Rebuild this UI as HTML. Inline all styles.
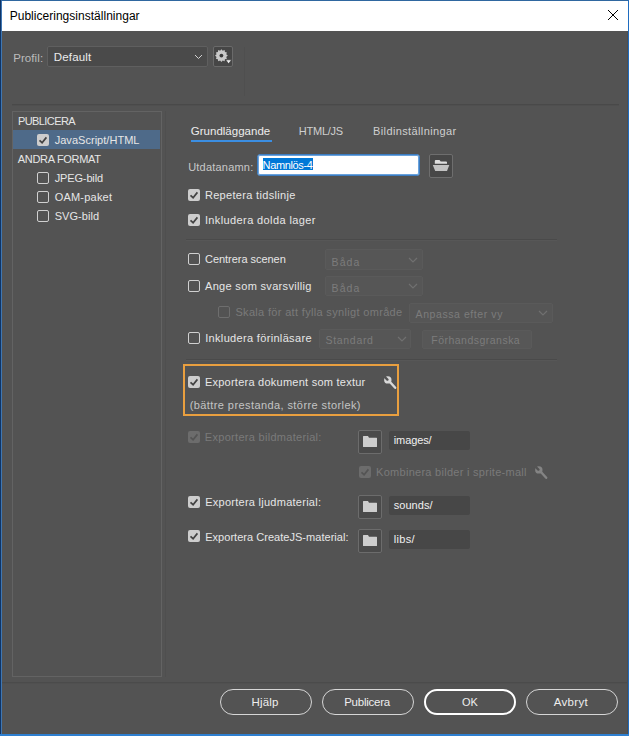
<!DOCTYPE html>
<html><head><meta charset="utf-8"><style>
html,body{margin:0;padding:0;width:629px;height:736px;overflow:hidden;background:#535353;}
.t{position:absolute;white-space:nowrap;line-height:1;font-family:"Liberation Sans",sans-serif;}
</style></head><body>
<div style="position:absolute;left:0px;top:0px;width:629px;height:31px;background:#ffffff"></div>
<div class="t" style="left:9.70px;top:10.24px;font-size:12px;letter-spacing:0.021px;color:#000000;">Publiceringsinställningar</div>
<svg style="position:absolute;left:607px;top:9px" width="12" height="12" viewBox="0 0 12 12"><path d="M1 1 L11 11 M11 1 L1 11" stroke="#000" stroke-width="1"/></svg>
<div class="t" style="left:13.20px;top:52.57px;font-size:11.5px;letter-spacing:0.084px;color:#bcbcbc;">Profil:</div>
<div style="position:absolute;left:47px;top:46px;width:161px;height:21px;box-sizing:border-box;border:1px solid #5f5f5f;background:#4a4a4a;border-radius:2px"></div>
<div class="t" style="left:53.80px;top:52.37px;font-size:11.5px;letter-spacing:0.161px;color:#ececec;">Default</div>
<svg style="position:absolute;left:194.0px;top:54.05px" width="9" height="5.5" viewBox="0 0 9 5.5"><path d="M1 1 L4.5 4.5 L8 1" fill="none" stroke="#d0d0d0" stroke-width="1.0"/></svg>
<div style="position:absolute;left:213px;top:46px;width:20px;height:21px;box-sizing:border-box;border:1px solid #6a6a6a;background:#464646;border-radius:2px"></div>
<svg style="position:absolute;left:213px;top:46px" width="20" height="21" viewBox="0 0 20 21"><polygon points="14.80,9.60 13.23,10.89 13.94,12.80 11.94,13.14 11.60,15.14 9.69,14.43 8.40,16.00 7.11,14.43 5.20,15.14 4.86,13.14 2.86,12.80 3.57,10.89 2.00,9.60 3.57,8.31 2.86,6.40 4.86,6.06 5.20,4.06 7.11,4.77 8.40,3.20 9.69,4.77 11.60,4.06 11.94,6.06 13.94,6.40 13.23,8.31" fill="#c9c9c9"/><circle cx="8.4" cy="9.6" r="1.9" fill="#3a3a3a"/><path d="M12.6 13.8 L18.6 13.8 L15.6 17.8 Z" fill="#eeeeee" stroke="#333" stroke-width="0.6"/></svg>
<div style="position:absolute;left:244px;top:47px;width:1px;height:49px;background:#4f4f4f"></div>
<div style="position:absolute;left:12px;top:104px;width:607px;height:1px;background:#494949"></div>
<div style="position:absolute;left:12px;top:105px;width:607px;height:1px;background:#4f4f4f"></div>
<div style="position:absolute;left:12px;top:111px;width:150px;height:566px;box-sizing:border-box;border:1px solid #636363;"></div>
<div style="position:absolute;left:165px;top:111px;width:1px;height:566px;background:#4f4f4f"></div>
<div style="position:absolute;left:13px;top:130px;width:147px;height:19px;background:#4e6a89"></div>
<div class="t" style="left:17.90px;top:115.99px;font-size:11px;letter-spacing:-0.569px;color:#e6e6e6;">PUBLICERA</div>
<svg style="position:absolute;left:37px;top:134px" width="12" height="12" viewBox="0 0 12 12"><rect x="0" y="0" width="12" height="12" rx="2" fill="#cdcdcd"/><path d="M2.5 6.3 L5.1 8.7 L9.4 3.4" fill="none" stroke="#434343" stroke-width="1.7"/></svg>
<div class="t" style="left:54.70px;top:135.09px;font-size:11px;letter-spacing:0.032px;color:#e6e6e6;">JavaScript/HTML</div>
<div class="t" style="left:17.80px;top:154.09px;font-size:11px;letter-spacing:-0.307px;color:#e6e6e6;">ANDRA FORMAT</div>
<svg style="position:absolute;left:37px;top:172px" width="12" height="12" viewBox="0 0 12 12"><rect x="0.5" y="0.5" width="11" height="11" rx="1.5" fill="none" stroke="#d0d0d0" stroke-width="1"/></svg>
<div class="t" style="left:54.70px;top:173.29px;font-size:11px;letter-spacing:-0.139px;color:#e6e6e6;">JPEG-bild</div>
<svg style="position:absolute;left:37px;top:191px" width="12" height="12" viewBox="0 0 12 12"><rect x="0.5" y="0.5" width="11" height="11" rx="1.5" fill="none" stroke="#d0d0d0" stroke-width="1"/></svg>
<div class="t" style="left:54.70px;top:192.39px;font-size:11px;letter-spacing:0.209px;color:#e6e6e6;">OAM-paket</div>
<svg style="position:absolute;left:37px;top:210px" width="12" height="12" viewBox="0 0 12 12"><rect x="0.5" y="0.5" width="11" height="11" rx="1.5" fill="none" stroke="#d0d0d0" stroke-width="1"/></svg>
<div class="t" style="left:54.70px;top:211.49px;font-size:11px;letter-spacing:0.069px;color:#e6e6e6;">SVG-bild</div>
<div class="t" style="left:190.80px;top:125.97px;font-size:11.5px;letter-spacing:0.010px;color:#ececec;">Grundläggande</div>
<div style="position:absolute;left:191px;top:140px;width:81px;height:2px;background:#3b8ee2"></div>
<div class="t" style="left:298.80px;top:126.39px;font-size:11px;letter-spacing:-0.239px;color:#cfcfcf;">HTML/JS</div>
<div class="t" style="left:373.00px;top:126.39px;font-size:11px;letter-spacing:0.385px;color:#cfcfcf;">Bildinställningar</div>
<div class="t" style="left:188.20px;top:162.49px;font-size:11px;letter-spacing:0.202px;color:#c8c8c8;">Utdatanamn:</div>
<div style="position:absolute;left:257px;top:154px;width:163px;height:22px;box-sizing:border-box;border:1px solid #3c7cc0;box-shadow:inset 0 0 0 1px #6aa2dc;background:#ffffff;border-radius:3px"></div>
<div style="position:absolute;left:263px;top:158px;width:50px;height:12px;background:#0078d7"></div>
<div class="t" style="left:262.60px;top:160.29px;font-size:11px;letter-spacing:-0.360px;color:#ffffff;">Namnlös-4</div>
<div style="position:absolute;left:429px;top:154px;width:24px;height:24px;box-sizing:border-box;border:1px solid #6e6e6e;background:#474747;border-radius:2px"></div>
<svg style="position:absolute;left:429px;top:154px" width="24" height="24" viewBox="0 0 24 24"><path d="M5.8 9.8 L5.8 7 Q5.8 6 6.8 6 L10.5 6 L11.7 7.4 L17 7.4 Q18 7.4 18 8.4 L18 9.8 Z" fill="#dedede"/><path d="M3.8 10.9 L20.3 10.9 L18 16.9 L6.2 16.9 Z" fill="#c2c2c2"/></svg>
<svg style="position:absolute;left:188px;top:189px" width="12" height="12" viewBox="0 0 12 12"><rect x="0" y="0" width="12" height="12" rx="2" fill="#cdcdcd"/><path d="M2.5 6.3 L5.1 8.7 L9.4 3.4" fill="none" stroke="#434343" stroke-width="1.7"/></svg>
<div class="t" style="left:204.90px;top:190.49px;font-size:11px;letter-spacing:0.324px;color:#e6e6e6;">Repetera tidslinje</div>
<svg style="position:absolute;left:188px;top:214px" width="12" height="12" viewBox="0 0 12 12"><rect x="0" y="0" width="12" height="12" rx="2" fill="#cdcdcd"/><path d="M2.5 6.3 L5.1 8.7 L9.4 3.4" fill="none" stroke="#434343" stroke-width="1.7"/></svg>
<div class="t" style="left:204.90px;top:214.69px;font-size:11px;letter-spacing:0.388px;color:#e6e6e6;">Inkludera dolda lager</div>
<div style="position:absolute;left:186px;top:239px;width:371px;height:1px;background:#4a4a4a"></div>
<div style="position:absolute;left:186px;top:240px;width:371px;height:1px;background:#575757"></div>
<svg style="position:absolute;left:188px;top:253px" width="12" height="12" viewBox="0 0 12 12"><rect x="0.5" y="0.5" width="11" height="11" rx="1.5" fill="none" stroke="#d0d0d0" stroke-width="1"/></svg>
<div class="t" style="left:205.00px;top:254.49px;font-size:11px;letter-spacing:-0.037px;color:#e6e6e6;">Centrera scenen</div>
<div style="position:absolute;left:325px;top:249px;width:98px;height:21px;box-sizing:border-box;border:1px solid #5a5a5a;background:#565656;border-radius:2px"></div>
<div class="t" style="left:331.60px;top:256.91px;font-size:10.5px;letter-spacing:1.093px;color:#7c7c7c;">Båda</div>
<svg style="position:absolute;left:408.0px;top:256.5px" width="10" height="6" viewBox="0 0 10 6"><path d="M1 1 L5.0 5 L9 1" fill="none" stroke="#707070" stroke-width="1.2"/></svg>
<svg style="position:absolute;left:188px;top:280px" width="12" height="12" viewBox="0 0 12 12"><rect x="0.5" y="0.5" width="11" height="11" rx="1.5" fill="none" stroke="#d0d0d0" stroke-width="1"/></svg>
<div class="t" style="left:205.00px;top:281.19px;font-size:11px;letter-spacing:0.324px;color:#e6e6e6;">Ange som svarsvillig</div>
<div style="position:absolute;left:325px;top:276px;width:98px;height:20px;box-sizing:border-box;border:1px solid #5a5a5a;background:#565656;border-radius:2px"></div>
<div class="t" style="left:331.60px;top:283.41px;font-size:10.5px;letter-spacing:1.093px;color:#7c7c7c;">Båda</div>
<svg style="position:absolute;left:408.0px;top:283.0px" width="10" height="6" viewBox="0 0 10 6"><path d="M1 1 L5.0 5 L9 1" fill="none" stroke="#707070" stroke-width="1.2"/></svg>
<svg style="position:absolute;left:218px;top:306px" width="12" height="12" viewBox="0 0 12 12"><rect x="0.5" y="0.5" width="11" height="11" rx="1.5" fill="none" stroke="#6e6e6e" stroke-width="1"/></svg>
<div class="t" style="left:235.40px;top:307.19px;font-size:11px;letter-spacing:0.330px;color:#7a7a7a;">Skala för att fylla synligt område</div>
<div style="position:absolute;left:409px;top:303px;width:144px;height:20px;box-sizing:border-box;border:1px solid #5a5a5a;background:#565656;border-radius:2px"></div>
<div class="t" style="left:415.60px;top:309.41px;font-size:10.5px;letter-spacing:0.573px;color:#7c7c7c;">Anpassa efter vy</div>
<svg style="position:absolute;left:538.0px;top:310.0px" width="10" height="6" viewBox="0 0 10 6"><path d="M1 1 L5.0 5 L9 1" fill="none" stroke="#707070" stroke-width="1.2"/></svg>
<svg style="position:absolute;left:188px;top:332px" width="12" height="12" viewBox="0 0 12 12"><rect x="0.5" y="0.5" width="11" height="11" rx="1.5" fill="none" stroke="#d0d0d0" stroke-width="1"/></svg>
<div class="t" style="left:205.20px;top:332.99px;font-size:11px;letter-spacing:0.332px;color:#e6e6e6;">Inkludera förinläsare</div>
<div style="position:absolute;left:319px;top:329px;width:92px;height:20px;box-sizing:border-box;border:1px solid #5a5a5a;background:#565656;border-radius:2px"></div>
<div class="t" style="left:325.60px;top:335.11px;font-size:10.5px;letter-spacing:0.670px;color:#7c7c7c;">Standard</div>
<svg style="position:absolute;left:396.6px;top:336.0px" width="10" height="6" viewBox="0 0 10 6"><path d="M1 1 L5.0 5 L9 1" fill="none" stroke="#707070" stroke-width="1.2"/></svg>
<div style="position:absolute;left:422px;top:330px;width:110px;height:19px;box-sizing:border-box;border:1px solid #5a5a5a;background:#575757;border-radius:2px"></div>
<div class="t" style="left:431.30px;top:335.11px;font-size:10.5px;letter-spacing:0.478px;color:#7c7c7c;">Förhandsgranska</div>
<div style="position:absolute;left:186px;top:359px;width:371px;height:1px;background:#4a4a4a"></div>
<div style="position:absolute;left:186px;top:360px;width:371px;height:1px;background:#575757"></div>
<div style="position:absolute;left:183px;top:364px;width:216px;height:52px;box-sizing:border-box;border:2px solid #e99f3f;"></div>
<svg style="position:absolute;left:188px;top:376px" width="12" height="12" viewBox="0 0 12 12"><rect x="0" y="0" width="12" height="12" rx="2" fill="#cdcdcd"/><path d="M2.5 6.3 L5.1 8.7 L9.4 3.4" fill="none" stroke="#434343" stroke-width="1.7"/></svg>
<div class="t" style="left:204.90px;top:377.29px;font-size:11px;letter-spacing:0.245px;color:#e6e6e6;">Exportera dokument som textur</div>
<svg style="position:absolute;left:383px;top:376px" width="14" height="14" viewBox="0 0 14 14"><path d="M6.5 5.5 L12.2 11.8" stroke="#d8d8d8" stroke-width="2.4" stroke-linecap="round"/><circle cx="4.8" cy="3.9" r="3.7" fill="#d8d8d8"/><path d="M4.4 3.6 L1.2 0.4" stroke="#535353" stroke-width="2.4" stroke-linecap="round"/></svg>
<div class="t" style="left:189.70px;top:399.69px;font-size:11px;letter-spacing:0.415px;color:#c4c4c4;">(bättre prestanda, större storlek)</div>
<svg style="position:absolute;left:188px;top:431px" width="12" height="12" viewBox="0 0 12 12"><rect x="0" y="0" width="12" height="12" rx="2" fill="#6c6c6c"/><path d="M2.5 6.3 L5.1 8.7 L9.4 3.4" fill="none" stroke="#545454" stroke-width="1.7"/></svg>
<div class="t" style="left:204.80px;top:431.89px;font-size:11px;letter-spacing:0.298px;color:#7a7a7a;">Exportera bildmaterial:</div>
<div style="position:absolute;left:358px;top:430px;width:24px;height:24px;box-sizing:border-box;border:1px solid #6c6c6c;background:#4a4a4a;border-radius:2px"></div>
<svg style="position:absolute;left:358px;top:430px" width="24" height="24" viewBox="0 0 24 24"><path d="M5 6.5 Q5 6 5.5 6 L10 6 L11 7.8 L18.5 7.8 Q19 7.8 19 8.3 L19 16.5 Q19 17 18.5 17 L5.5 17 Q5 17 5 16.5 Z" fill="#cdcdcd"/></svg>
<div style="position:absolute;left:389px;top:431px;width:81px;height:19px;background:#474747;border-radius:2px"></div>
<div class="t" style="left:393.80px;top:435.29px;font-size:11px;letter-spacing:-0.119px;color:#f0f0f0;">images/</div>
<svg style="position:absolute;left:359px;top:466px" width="12" height="12" viewBox="0 0 12 12"><rect x="0" y="0" width="12" height="12" rx="2" fill="#6c6c6c"/><path d="M2.5 6.3 L5.1 8.7 L9.4 3.4" fill="none" stroke="#545454" stroke-width="1.7"/></svg>
<div class="t" style="left:376.10px;top:467.19px;font-size:11px;letter-spacing:0.275px;color:#7a7a7a;">Kombinera bilder i sprite-mall</div>
<svg style="position:absolute;left:534px;top:466px" width="14" height="14" viewBox="0 0 14 14"><path d="M6.5 5.5 L12.2 11.8" stroke="#848484" stroke-width="2.4" stroke-linecap="round"/><circle cx="4.8" cy="3.9" r="3.7" fill="#848484"/><path d="M4.4 3.6 L1.2 0.4" stroke="#535353" stroke-width="2.4" stroke-linecap="round"/></svg>
<svg style="position:absolute;left:188px;top:496px" width="12" height="12" viewBox="0 0 12 12"><rect x="0" y="0" width="12" height="12" rx="2" fill="#cdcdcd"/><path d="M2.5 6.3 L5.1 8.7 L9.4 3.4" fill="none" stroke="#434343" stroke-width="1.7"/></svg>
<div class="t" style="left:205.20px;top:497.19px;font-size:11px;letter-spacing:0.262px;color:#e6e6e6;">Exportera ljudmaterial:</div>
<div style="position:absolute;left:358px;top:495px;width:24px;height:24px;box-sizing:border-box;border:1px solid #6c6c6c;background:#4a4a4a;border-radius:2px"></div>
<svg style="position:absolute;left:358px;top:495px" width="24" height="24" viewBox="0 0 24 24"><path d="M5 6.5 Q5 6 5.5 6 L10 6 L11 7.8 L18.5 7.8 Q19 7.8 19 8.3 L19 16.5 Q19 17 18.5 17 L5.5 17 Q5 17 5 16.5 Z" fill="#cdcdcd"/></svg>
<div style="position:absolute;left:389px;top:496px;width:81px;height:19px;background:#474747;border-radius:2px"></div>
<div class="t" style="left:393.80px;top:500.29px;font-size:11px;letter-spacing:0.029px;color:#f0f0f0;">sounds/</div>
<svg style="position:absolute;left:188px;top:530px" width="12" height="12" viewBox="0 0 12 12"><rect x="0" y="0" width="12" height="12" rx="2" fill="#cdcdcd"/><path d="M2.5 6.3 L5.1 8.7 L9.4 3.4" fill="none" stroke="#434343" stroke-width="1.7"/></svg>
<div class="t" style="left:205.20px;top:531.59px;font-size:11px;letter-spacing:0.032px;color:#e6e6e6;">Exportera CreateJS-material:</div>
<div style="position:absolute;left:358px;top:529px;width:24px;height:24px;box-sizing:border-box;border:1px solid #6c6c6c;background:#4a4a4a;border-radius:2px"></div>
<svg style="position:absolute;left:358px;top:529px" width="24" height="24" viewBox="0 0 24 24"><path d="M5 6.5 Q5 6 5.5 6 L10 6 L11 7.8 L18.5 7.8 Q19 7.8 19 8.3 L19 16.5 Q19 17 18.5 17 L5.5 17 Q5 17 5 16.5 Z" fill="#cdcdcd"/></svg>
<div style="position:absolute;left:389px;top:530px;width:81px;height:19px;background:#474747;border-radius:2px"></div>
<div class="t" style="left:393.80px;top:534.39px;font-size:11px;letter-spacing:0.310px;color:#f0f0f0;">libs/</div>
<div style="position:absolute;left:2px;top:682px;width:626px;height:1px;background:#4b4b4b"></div>
<div style="position:absolute;left:2px;top:683px;width:626px;height:1px;background:#505050"></div>
<div style="position:absolute;left:220px;top:689px;width:92px;height:26px;box-sizing:border-box;border:1px solid #d6d6d6;border-radius:13px"></div>
<div class="t" style="left:251.40px;top:697.07px;font-size:11.5px;letter-spacing:0.199px;color:#eeeeee;">Hjälp</div>
<div style="position:absolute;left:322px;top:689px;width:92px;height:26px;box-sizing:border-box;border:1px solid #d6d6d6;border-radius:13px"></div>
<div class="t" style="left:344.20px;top:697.07px;font-size:11.5px;letter-spacing:-0.243px;color:#eeeeee;">Publicera</div>
<div style="position:absolute;left:424px;top:689px;width:92px;height:26px;box-sizing:border-box;border:2px solid #ffffff;border-radius:13px"></div>
<div class="t" style="left:462.00px;top:697.49px;font-size:11px;letter-spacing:0.000px;color:#eeeeee;">OK</div>
<div style="position:absolute;left:526px;top:689px;width:92px;height:26px;box-sizing:border-box;border:1px solid #d6d6d6;border-radius:13px"></div>
<div class="t" style="left:553.70px;top:697.07px;font-size:11.5px;letter-spacing:0.343px;color:#eeeeee;">Avbryt</div>
<div style="position:absolute;left:0px;top:0px;width:629px;height:1px;background:#2f67a0"></div>
<div style="position:absolute;left:0px;top:0px;width:1px;height:736px;background:#0f3466"></div>
<div style="position:absolute;left:1px;top:1px;width:1px;height:735px;background:#3f77b3"></div>
<div style="position:absolute;left:627px;top:31px;width:1px;height:705px;background:#4e4e4e"></div>
<div style="position:absolute;left:628px;top:0px;width:1px;height:736px;background:#1f6cc0"></div>
<div style="position:absolute;left:0px;top:734px;width:629px;height:2px;background:#2e7fd0"></div>
</body></html>
